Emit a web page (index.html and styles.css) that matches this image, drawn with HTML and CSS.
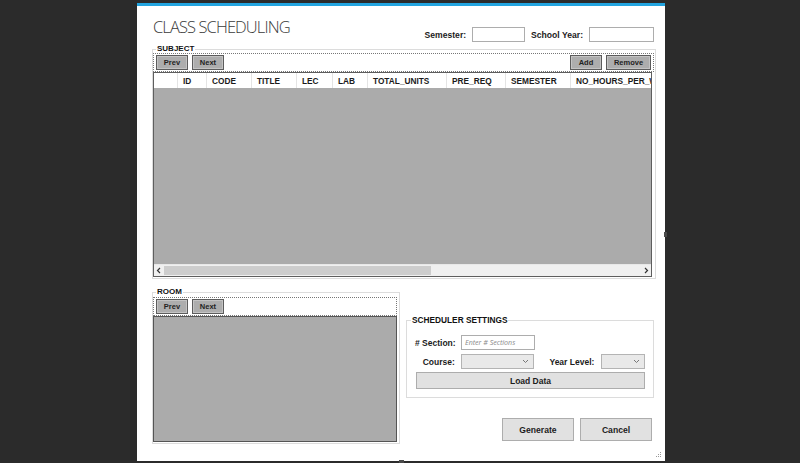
FILE: index.html
```html
<!DOCTYPE html>
<html lang="en">
<head>
<meta charset="utf-8">
<title>Class Scheduling</title>
<link rel="stylesheet" href="styles.css">
</head>
<body>
<div class="window">
  <div class="topbar">
    <h1 class="title">CLASS SCHEDULING</h1>
    <div class="period">
      <span class="lbl-lg">Semester:</span><span class="textbox tb-sem"></span>
      <span class="lbl-lg">School Year:</span><span class="textbox tb-year"></span>
    </div>
  </div>

  <fieldset class="group subject">
    <legend>SUBJECT</legend>
    <div class="toolbar">
      <button class="nav">Prev</button><button class="nav">Next</button>
      <span class="spacer"></span>
      <button class="nav">Add</button><button class="nav btn-remove">Remove</button>
    </div>
    <div class="grid">
      <div class="grid-head">
        <span class="cell c-row"></span>
        <span class="cell c-id">ID</span>
        <span class="cell c-code">CODE</span>
        <span class="cell c-title">TITLE</span>
        <span class="cell c-lec">LEC</span>
        <span class="cell c-lab">LAB</span>
        <span class="cell c-total">TOTAL_UNITS</span>
        <span class="cell c-pre">PRE_REQ</span>
        <span class="cell c-sem">SEMESTER</span>
        <span class="cell c-hours">NO_HOURS_PER_WEEK</span>
      </div>
      <div class="grid-body"></div>
      <div class="hscroll">
        <span class="arrow"><svg width="6" height="7" viewBox="0 0 6 7"><polyline points="4,1 1.5,3.5 4,6" fill="none" stroke="#333" stroke-width="1.2"/></svg></span>
        <span class="track"><span class="thumb"></span></span>
        <span class="arrow"><svg width="6" height="7" viewBox="0 0 6 7"><polyline points="2,1 4.5,3.5 2,6" fill="none" stroke="#333" stroke-width="1.2"/></svg></span>
      </div>
    </div>
  </fieldset>

  <div class="lower">
    <fieldset class="group room">
      <legend>ROOM</legend>
      <div class="toolbar">
        <button class="nav">Prev</button><button class="nav">Next</button>
      </div>
      <div class="panel"></div>
    </fieldset>

    <div class="right-col">
      <fieldset class="group settings">
        <legend>SCHEDULER SETTINGS</legend>
        <div class="form-row">
          <span class="lbl">#&nbsp;Section:</span>
          <span class="textbox tb-section">Enter # Sections</span>
        </div>
        <div class="form-row">
          <span class="lbl">Course:</span>
          <span class="combo cb-course"><svg width="7" height="5" viewBox="0 0 7 5"><polyline points="1,1 3.5,3.5 6,1" fill="none" stroke="#777" stroke-width="1"/></svg></span>
          <span class="lbl lbl-year">Year Level:</span>
          <span class="combo cb-year"><svg width="7" height="5" viewBox="0 0 7 5"><polyline points="1,1 3.5,3.5 6,1" fill="none" stroke="#777" stroke-width="1"/></svg></span>
        </div>
        <button class="btn-load">Load Data</button>
      </fieldset>
      <div class="actions">
        <button class="btn-action">Generate</button>
        <button class="btn-action">Cancel</button>
      </div>
    </div>
  </div>

  <svg class="grip" width="7" height="7" viewBox="0 0 7 7">
    <rect x="5" y="1" width="1" height="1" fill="#999"/>
    <rect x="3" y="3" width="1" height="1" fill="#999"/>
    <rect x="5" y="3" width="1" height="1" fill="#999"/>
    <rect x="1" y="5" width="1" height="1" fill="#999"/>
    <rect x="3" y="5" width="1" height="1" fill="#999"/>
    <rect x="5" y="5" width="1" height="1" fill="#999"/>
  </svg>
  <span class="handle handle-right"></span>
  <span class="handle handle-bottom"></span>
</div>
</body>
</html>
```

FILE: styles.css
```css
* { box-sizing: border-box; }

body {
  margin: 0;
  height: 463px;
  overflow: hidden;
  background: #2b2b2b;
  font-family: "Liberation Sans", Arial, sans-serif;
  color: #1c1c1c;
}

.window {
  position: relative;
  margin: 3px 0 0 137px;
  width: 528px;
  height: 458px;
  background: #fff;
  border-top: 3px solid #22a4df;
  padding: 0 9px 0 15px;
}

/* title row */
.topbar {
  display: flex;
  justify-content: space-between;
  height: 39px;
}

.title {
  margin: 9px 0 0 1px;
  font-family: "Open Sans", "Liberation Sans", sans-serif;
  font-weight: 300;
  font-size: 16.5px;
  line-height: 24px;
  letter-spacing: -0.9px;
  color: #3a3a3a;
}

.period {
  display: flex;
  align-items: center;
  height: 15px;
  margin: 21px 2px 0 0;
  gap: 6px;
}

.lbl-lg {
  font-size: 8.6px;
  font-weight: bold;
}

.textbox {
  display: block;
  height: 15px;
  border: 1px solid #adadad;
  background: #fff;
}

.tb-sem { width: 53px; }
.tb-year { width: 65px; }

/* group boxes */
.group {
  margin: 0;
  padding: 0;
  border: 1px solid #dcdcdc;
  min-width: 0;
}

.group legend {
  margin-left: 3px;
  padding: 0 1px;
  font-size: 8px;
  font-weight: bold;
  line-height: 8px;
  color: #111;
}

.subject {
  padding: 0 1px 1px 0;
}

.toolbar {
  display: flex;
  align-items: center;
  height: 19px;
  padding: 0 2px;
  gap: 4px;
  border: 1px dotted #777;
}

.spacer { flex: 1; }

.nav {
  height: 15px;
  width: 32px;
  padding: 0;
  margin: 0;
  font-family: inherit;
  font-size: 7.5px;
  font-weight: bold;
  color: #222;
  background: #adadad;
  border: 1px solid #5c5c5c;
  box-shadow: inset 0 0 0 1px #c4c4c4;
}

.btn-remove { width: 45px; }

/* data grid */
.grid {
  margin-right: 2px;
  height: 205px;
  border: 1px solid #5e5e5e;
  display: flex;
  flex-direction: column;
}

.grid-head {
  display: flex;
  height: 15px;
  background: #fff;
  overflow: hidden;
  white-space: nowrap;
}

.cell {
  flex: none;
  padding-left: 5px;
  font-size: 8.3px;
  font-weight: bold;
  line-height: 16px;
  color: #1a1a1a;
  border-right: 1px solid #e4e4e4;
  overflow: hidden;
}

.c-row { width: 24px; }
.c-id { width: 29px; }
.c-code { width: 45px; }
.c-title { width: 45px; }
.c-lec { width: 36px; }
.c-lab { width: 35px; }
.c-total { width: 79px; }
.c-pre { width: 59px; }
.c-sem { width: 65px; }
.c-hours { flex: 1; border-right: 0; }

.grid-body {
  flex: 1;
  background: #ababab;
}

.hscroll {
  display: flex;
  height: 12px;
  background: #f0f0f0;
  border-top: 1px solid #e8e8e8;
}

.arrow {
  width: 10px;
  display: flex;
  align-items: center;
  justify-content: center;
}

.track {
  flex: 1;
  display: flex;
  align-items: stretch;
  padding: 1px 0;
}

.thumb {
  width: 267px;
  background: #cdcdcd;
}

/* lower area */
.lower {
  display: flex;
  margin-top: 9px;
  gap: 6px;
}

.room {
  width: 248px;
  height: 156px;
  padding: 1px 1px 0 0;
}

.room .toolbar { margin-right: 1px; }

.panel {
  height: 126px;
  background: #ababab;
  border: 1px solid #555;
  margin-right: 1px;
}

.right-col {
  width: 249px;
  margin-top: 28px;
}

.settings {
  padding: 11px 8px 8px 8px;
  margin-right: 1px;
}

.settings legend {
  margin-left: -4px;
  font-size: 8.3px;
}

.form-row {
  display: flex;
  align-items: center;
  gap: 6px;
  height: 15px;
  margin-bottom: 4px;
}

.form-row + .form-row { margin-bottom: 3px; }

.lbl {
  width: 40px;
  text-align: right;
  font-size: 8.5px;
  font-weight: bold;
  white-space: nowrap;
}

.lbl-year {
  width: 46px;
  margin-left: 9px;
  text-align: left;
}

.tb-section {
  width: 74px;
  padding-left: 3px;
  font-family: "Open Sans", "Liberation Sans", sans-serif;
  font-style: italic;
  font-size: 7.1px;
  line-height: 13px;
  color: #8a8a8a;
  white-space: nowrap;
  overflow: hidden;
}

.combo {
  display: flex;
  align-items: center;
  justify-content: flex-end;
  height: 15px;
  padding-right: 4px;
  background: #e9e9e9;
  border: 1px solid #b4b4b4;
}

.cb-course { width: 74px; }
.cb-year { width: 44px; }

.btn-load {
  display: block;
  margin-left: 1px;
  width: 229px;
  height: 17px;
  padding: 0;
  font-family: inherit;
  font-size: 8.5px;
  font-weight: bold;
  color: #1c1c1c;
  background: #e1e1e1;
  border: 1px solid #adadad;
}

.actions {
  display: flex;
  justify-content: flex-end;
  gap: 6px;
  margin-top: 20px;
  padding-right: 3px;
}

.btn-action {
  width: 72px;
  height: 23px;
  padding: 0;
  font-family: inherit;
  font-size: 8.6px;
  font-weight: bold;
  color: #1c1c1c;
  background: #e1e1e1;
  border: 1px solid #adadad;
}

/* window decorations */
.grip {
  position: absolute;
  right: 3px;
  bottom: 3px;
}

.handle {
  position: absolute;
  width: 3px;
  height: 5px;
  background: #4a4a4a;
}

.handle-right {
  right: -2px;
  top: 226px;
}

.handle-bottom {
  left: 262px;
  bottom: -2px;
  width: 5px;
  height: 3px;
}
```
